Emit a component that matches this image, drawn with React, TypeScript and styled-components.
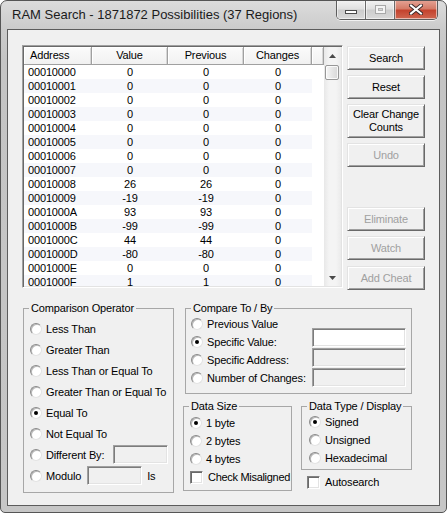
import React from 'react';
import styled, { createGlobalStyle } from 'styled-components';

const GlobalStyle = createGlobalStyle`
  html, body {
    margin: 0;
    padding: 0;
    background: #ffffff;
  }
  body {
    font-family: 'Liberation Sans', Arial, sans-serif;
    font-size: 11px;
    letter-spacing: -0.15px;
    color: #000000;
  }
  * {
    box-sizing: border-box;
  }
`;

type Row = [string, number, number, number];

const ROWS: Row[] = [
    ['00010000', 0, 0, 0],
    ['00010001', 0, 0, 0],
    ['00010002', 0, 0, 0],
    ['00010003', 0, 0, 0],
    ['00010004', 0, 0, 0],
    ['00010005', 0, 0, 0],
    ['00010006', 0, 0, 0],
    ['00010007', 0, 0, 0],
    ['00010008', 26, 26, 0],
    ['00010009', -19, -19, 0],
    ['0001000A', 93, 93, 0],
    ['0001000B', -99, -99, 0],
    ['0001000C', 44, 44, 0],
    ['0001000D', -80, -80, 0],
    ['0001000E', 0, 0, 0],
    ['0001000F', 1, 1, 0],
];

type Column = { title: string; width: number; align: 'left' | 'center' };

const COLUMNS: Column[] = [
    { title: 'Address', width: 68, align: 'left' },
    { title: 'Value', width: 76, align: 'center' },
    { title: 'Previous', width: 76, align: 'center' },
    { title: 'Changes', width: 68, align: 'center' },
];

const OPERATORS = [
    'Less Than',
    'Greater Than',
    'Less Than or Equal To',
    'Greater Than or Equal To',
    'Equal To',
    'Not Equal To',
];

export default function App() {
    return (
        <>
            <GlobalStyle />
            <Window>
                <TitleBar>
                    <Title>RAM Search - 1871872 Possibilities (37 Regions)</Title>
                    <CaptionGroup>
                        <CaptionButton $kind='min'>
                            <MinGlyph />
                        </CaptionButton>
                        <CaptionButton $kind='max'>
                            <MaxGlyph />
                        </CaptionButton>
                        <CaptionButton $kind='close'>
                            <svg width='14' height='11' viewBox='0 0 14 11'>
                                <path d='M2 1.5 L12 9.5 M12 1.5 L2 9.5' stroke='#3c2a2a' strokeWidth='4' strokeLinecap='square' />
                                <path d='M2 1.5 L12 9.5 M12 1.5 L2 9.5' stroke='#ffffff' strokeWidth='2' strokeLinecap='square' />
                            </svg>
                        </CaptionButton>
                    </CaptionGroup>
                </TitleBar>

                <Client>
                    <TopRow>
                        <ListView>
                            <ListMain>
                                <HeaderRow>
                                    {COLUMNS.map((col) => (
                                        <HeaderCell key={col.title} $width={col.width} $align={col.align}>
                                            {col.title}
                                        </HeaderCell>
                                    ))}
                                    <HeaderCell $width={12} $align='left' />
                                </HeaderRow>
                                <RowsArea>
                                    {ROWS.map((row, i) => (
                                        <DataRow key={row[0]} $odd={i % 2 === 1}>
                                            {row.map((value, c) => (
                                                <Cell key={c} $width={COLUMNS[c].width} $align={COLUMNS[c].align}>
                                                    {value}
                                                </Cell>
                                            ))}
                                        </DataRow>
                                    ))}
                                </RowsArea>
                            </ListMain>
                            <ScrollBar>
                                <ScrollArrow>
                                    <svg width='7' height='4' viewBox='0 0 7 4'>
                                        <path d='M0 4 L3.5 0 L7 4 Z' fill='#4a4a4a' />
                                    </svg>
                                </ScrollArrow>
                                <Thumb />
                                <ScrollTrack />
                                <ScrollArrow>
                                    <svg width='7' height='4' viewBox='0 0 7 4'>
                                        <path d='M0 0 L3.5 4 L7 0 Z' fill='#4a4a4a' />
                                    </svg>
                                </ScrollArrow>
                            </ScrollBar>
                        </ListView>

                        <ButtonColumn>
                            <Button $top={0}>Search</Button>
                            <Button $top={5}>Reset</Button>
                            <Button $top={5} $height={34}>
                                Clear Change Counts
                            </Button>
                            <Button $top={5} disabled>
                                Undo
                            </Button>
                            <Button $top={40} disabled>
                                Eliminate
                            </Button>
                            <Button $top={5} disabled>
                                Watch
                            </Button>
                            <Button $top={6} disabled>
                                Add Cheat
                            </Button>
                        </ButtonColumn>
                    </TopRow>

                    <BottomRow>
                        <Group $width={151} $height={191} $left={1}>
                            <Legend>Comparison Operator</Legend>
                            <Options $top={3} $left={1}>
                                {OPERATORS.map((op) => (
                                    <Option key={op} $height={21}>
                                        <Radio $checked={op === 'Equal To'} />
                                        {op}
                                    </Option>
                                ))}
                                <Option $height={21}>
                                    <Radio />
                                    Different By:
                                    <TextBox $width={55} $disabled $push />
                                </Option>
                                <Option $height={21}>
                                    <Radio />
                                    Modulo
                                    <TextBox $width={55} $disabled $gap={6} />
                                    <Trailing>Is</Trailing>
                                </Option>
                            </Options>
                        </Group>

                        <RightColumn>
                            <Group $width={227} $height={92} $left={2}>
                                <Legend>Compare To / By</Legend>
                                <CompareBody>
                                    <Options $top={0} $left={0}>
                                        <Option $height={18}>
                                            <Radio />
                                            Previous Value
                                        </Option>
                                        <Option $height={18}>
                                            <Radio $checked />
                                            Specific Value:
                                        </Option>
                                        <Option $height={18}>
                                            <Radio />
                                            Specific Address:
                                        </Option>
                                        <Option $height={18}>
                                            <Radio />
                                            Number of Changes:
                                        </Option>
                                    </Options>
                                    <FieldStack>
                                        <TextBox $width={94} />
                                        <TextBox $width={94} $disabled />
                                        <TextBox $width={94} $disabled />
                                    </FieldStack>
                                </CompareBody>
                            </Group>

                            <LowerRow>
                                <Group $width={109} $height={91} $left={0}>
                                    <Legend>Data Size</Legend>
                                    <Options $top={1} $left={1}>
                                        <Option $height={18}>
                                            <Radio $checked />1 byte
                                        </Option>
                                        <Option $height={18}>
                                            <Radio />2 bytes
                                        </Option>
                                        <Option $height={18}>
                                            <Radio />4 bytes
                                        </Option>
                                        <Option $height={18} $tight>
                                            <CheckBox />
                                            Check Misaligned
                                        </Option>
                                    </Options>
                                </Group>

                                <TypeColumn>
                                    <Group $width={111} $height={70} $left={0}>
                                        <Legend>Data Type / Display</Legend>
                                        <Options $top={0} $left={2}>
                                            <Option $height={18}>
                                                <Radio $checked />
                                                Signed
                                            </Option>
                                            <Option $height={18}>
                                                <Radio />
                                                Unsigned
                                            </Option>
                                            <Option $height={18}>
                                                <Radio />
                                                Hexadecimal
                                            </Option>
                                        </Options>
                                    </Group>
                                    <Option $height={14} $indent={6} $top={5}>
                                        <CheckBox />
                                        Autosearch
                                    </Option>
                                </TypeColumn>
                            </LowerRow>
                        </RightColumn>
                    </BottomRow>
                </Client>
            </Window>
        </>
    );
}

const Window = styled.div`
    width: 447px;
    height: 513px;
    border: 1px solid #555555;
    border-radius: 7px 7px 5px 5px;
    background: linear-gradient(#dcdcdc, #cbcbcb 28px, #c4c4c4 60px, #c6c6c6);
    display: flex;
    flex-direction: column;
    overflow: hidden;
`;

const TitleBar = styled.div`
    height: 28px;
    display: flex;
    align-items: flex-start;
    padding-left: 11px;
    padding-right: 8px;
`;

const Title = styled.div`
    margin-top: 6px;
    line-height: 16px;
    font-size: 13px;
    letter-spacing: 0;
    color: #1b1b1b;
    white-space: nowrap;
`;

const CaptionGroup = styled.div`
    margin-left: auto;
    margin-top: -1px;
    display: flex;
    height: 20px;
    border: 1px solid #5d5d5d;
    border-top: none;
    border-radius: 0 0 5px 5px;
    overflow: hidden;
    box-shadow: 0 1px 0 rgba(255, 255, 255, 0.7);
`;

type CaptionKind = 'min' | 'max' | 'close';

const CaptionButton = styled.div<{ $kind: CaptionKind }>`
    width: ${({ $kind }) => ($kind === 'close' ? 43 : $kind === 'max' ? 29 : 28)}px;
    height: 100%;
    display: flex;
    align-items: center;
    justify-content: center;
    border-left: ${({ $kind }) => ($kind === 'min' ? 'none' : '1px solid #6a6a6a')};
    box-shadow: inset 0 0 0 1px rgba(255, 255, 255, 0.55);
    background: ${({ $kind }) =>
        $kind === 'close'
            ? 'linear-gradient(#e6a597, #d57c68 45%, #c4432e 55%, #cf6650)'
            : 'linear-gradient(#f4f4f4, #e1e1e1 45%, #cdcdcd 55%, #d9d9d9)'};
`;

const MinGlyph = styled.span`
    display: block;
    width: 12px;
    height: 4px;
    margin-top: 5px;
    background: #ffffff;
    border: 1px solid #4b4b4b;
`;

const MaxGlyph = styled.span`
    display: block;
    width: 11px;
    height: 9px;
    border: 1px solid #a8a8a8;
    box-shadow: inset 0 0 0 2px #f4f4f4, inset 0 0 0 3px #b4b4b4;
`;

const Client = styled.div`
    flex: 1;
    margin: 0 6px 6px;
    border: 1px solid #5c5c5c;
    background: #f0f0f0;
    padding: 15px 14px 0 14px;
    display: flex;
    flex-direction: column;
`;

const TopRow = styled.div`
    display: flex;
    align-items: flex-start;
    gap: 4px;
`;

const ListView = styled.div`
    width: 321px;
    height: 243px;
    display: flex;
    background: #ffffff;
    border: 1px solid;
    border-color: #a0a0a0 #ffffff #ffffff #a0a0a0;
    box-shadow: inset 1px 1px 0 #696969, inset -1px -1px 0 #e3e3e3;
    padding: 1px 1px 1px 1px;
    overflow: hidden;
`;

const ListMain = styled.div`
    width: 300px;
    display: flex;
    flex-direction: column;
`;

const HeaderRow = styled.div`
    display: flex;
    height: 18px;
    flex-shrink: 0;
`;

type AlignProps = { $width: number; $align: 'left' | 'center' };

const HeaderCell = styled.div<AlignProps>`
    width: ${({ $width }) => $width}px;
    height: 18px;
    line-height: 16px;
    padding-left: ${({ $align }) => ($align === 'left' ? 6 : 0)}px;
    text-align: ${({ $align }) => $align};
    background: linear-gradient(#fbfbfb, #f1f1f1);
    border-right: 1px solid #a0a0a0;
    border-bottom: 1px solid #a0a0a0;
    box-shadow: inset 1px 1px 0 #ffffff, inset -1px 0 0 #d6d6d6;
    color: #000000;
`;

const RowsArea = styled.div`
    flex: 1;
    overflow: hidden;
`;

const DataRow = styled.div<{ $odd: boolean }>`
    display: flex;
    width: 288px;
    height: 14px;
    line-height: 14px;
    background: ${({ $odd }) => ($odd ? '#f6f7fb' : '#ffffff')};
`;

const Cell = styled.div<AlignProps>`
    width: ${({ $width }) => $width}px;
    padding-left: ${({ $align }) => ($align === 'left' ? 4 : 0)}px;
    text-align: ${({ $align }) => $align};
    white-space: nowrap;
`;

const ScrollBar = styled.div`
    width: 17px;
    display: flex;
    flex-direction: column;
    background: linear-gradient(90deg, #e8e8e8, #f4f4f4 30%, #f4f4f4 70%, #ebebeb);
`;

const ScrollArrow = styled.div`
    height: 17px;
    display: flex;
    align-items: center;
    justify-content: center;
    flex-shrink: 0;
`;

const Thumb = styled.div`
    width: 14px;
    height: 15px;
    margin: 1px 0 0 1px;
    border: 1px solid #979797;
    border-radius: 2px;
    background: linear-gradient(90deg, #f6f6f6, #e6e6e6 50%, #d8d8d8);
    box-shadow: inset 0 0 0 1px rgba(255, 255, 255, 0.8);
    flex-shrink: 0;
`;

const ScrollTrack = styled.div`
    flex: 1;
`;

const ButtonColumn = styled.div`
    width: 78px;
    margin-top: 1px;
    display: flex;
    flex-direction: column;
`;

const Button = styled.button<{ $top: number; $height?: number }>`
    margin-top: ${({ $top }) => $top}px;
    height: ${({ $height }) => $height ?? 24}px;
    width: 100%;
    padding: 0 2px;
    font-family: inherit;
    font-size: 11px;
    letter-spacing: -0.15px;
    line-height: 13px;
    color: #000000;
    background: #f0f0f0;
    border: 1px solid;
    border-color: #e3e3e3 #696969 #696969 #e3e3e3;
    box-shadow: inset 1px 1px 0 #ffffff, inset -1px -1px 0 #a0a0a0;
    border-radius: 0;

    &:disabled {
        color: #a0a0a0;
    }
`;

const BottomRow = styled.div`
    margin-top: 12px;
    display: flex;
    align-items: flex-start;
`;

const Group = styled.fieldset<{ $width: number; $height: number; $left: number }>`
    margin: 0 0 0 ${({ $left }) => $left}px;
    min-width: 0;
    width: ${({ $width }) => $width}px;
    height: ${({ $height }) => $height}px;
    padding: 0 5px;
    border: 1px solid #a7a7a7;
    display: flex;
    flex-direction: column;
`;

const Legend = styled.legend`
    padding: 0 2px;
    line-height: 13px;
    font-size: 11px;
`;

const Options = styled.div<{ $top: number; $left: number }>`
    padding-top: ${({ $top }) => $top}px;
    padding-left: ${({ $left }) => $left}px;
    display: flex;
    flex-direction: column;
`;

const Option = styled.div<{ $height: number; $indent?: number; $top?: number; $tight?: boolean }>`
    height: ${({ $height }) => $height}px;
    margin-top: ${({ $top }) => $top ?? 0}px;
    padding-left: ${({ $indent }) => $indent ?? 0}px;
    display: flex;
    align-items: center;
    gap: 4px;
    white-space: nowrap;
    letter-spacing: ${({ $tight }) => ($tight ? '-0.3px' : 'inherit')};
`;

const Radio = styled.span<{ $checked?: boolean }>`
    width: 12px;
    height: 12px;
    flex-shrink: 0;
    border-radius: 50%;
    background: #ffffff;
    border: 1px solid;
    border-color: #8a8a8a #e2e2e2 #e2e2e2 #8a8a8a;
    box-shadow: inset 1px 1px 0 #b8b8b8;
    display: flex;
    align-items: center;
    justify-content: center;

    &::after {
        content: '';
        display: ${({ $checked }) => ($checked ? 'block' : 'none')};
        width: 4px;
        height: 4px;
        border-radius: 50%;
        background: #000000;
    }
`;

const CheckBox = styled.span`
    width: 13px;
    height: 13px;
    flex-shrink: 0;
    margin-right: 1px;
    background: #ffffff;
    border: 1px solid;
    border-color: #808080 #ffffff #ffffff #808080;
    box-shadow: inset 1px 1px 0 #696969, inset -1px -1px 0 #e3e3e3;
`;

const TextBox = styled.span<{ $width: number; $disabled?: boolean; $push?: boolean; $gap?: number }>`
    display: block;
    width: ${({ $width }) => $width}px;
    height: 19px;
    flex-shrink: 0;
    margin-left: ${({ $push, $gap }) => ($push ? 'auto' : `${($gap ?? 0) - 4}px`)};
    background: ${({ $disabled }) => ($disabled ? '#f0f0f0' : '#ffffff')};
    border: 1px solid;
    border-color: #a0a0a0 #ffffff #ffffff #a0a0a0;
    box-shadow: inset 1px 1px 0 #7c7c7c, inset -1px -1px 0 #e3e3e3;
`;

const Trailing = styled.span`
    margin-left: 1px;
`;

const RightColumn = styled.div`
    margin-left: 9px;
    display: flex;
    flex-direction: column;
`;

const CompareBody = styled.div`
    display: flex;
    align-items: flex-start;
`;

const FieldStack = styled.div`
    margin-left: auto;
    margin-top: 13px;
    margin-right: 0;
    display: flex;
    flex-direction: column;
    gap: 1px;
`;

const LowerRow = styled.div`
    margin-top: 6px;
    display: flex;
    align-items: flex-start;
    gap: 9px;
`;

const TypeColumn = styled.div`
    display: flex;
    flex-direction: column;
`;
